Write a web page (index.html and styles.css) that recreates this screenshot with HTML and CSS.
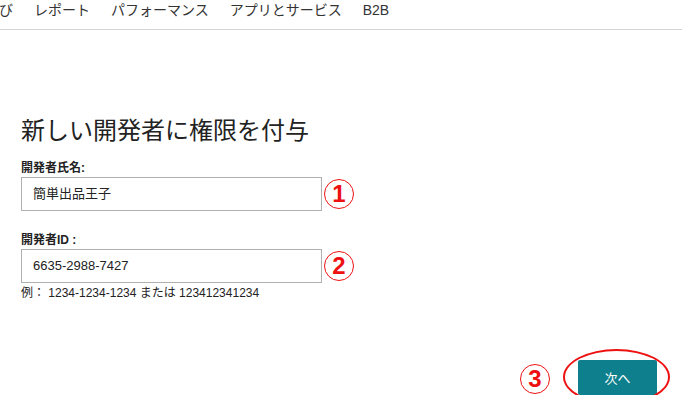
FILE: index.html
```html
<!DOCTYPE html>
<html lang="ja">
<head>
    <meta charset="UTF-8">
    <title>新しい開発者に権限を付与</title>
    <link rel="stylesheet" href="styles.css">
</head>
<body>
<nav class="topnav">
    <span class="nav-item first">び</span>
    <span class="nav-item">レポート</span>
    <span class="nav-item">パフォーマンス</span>
    <span class="nav-item">アプリとサービス</span>
    <span class="nav-item">B2B</span>
</nav>
<main>
    <h1>新しい開発者に権限を付与</h1>
    <label class="field-label">開発者氏名:</label>
    <div class="field-row">
        <div class="input-box">簡単出品王子</div>
        <span class="mark">1</span>
    </div>
    <label class="field-label second">開発者ID :</label>
    <div class="field-row">
        <div class="input-box">6635-2988-7427</div>
        <span class="mark">2</span>
    </div>
    <p class="hint">例： 1234-1234-1234 または 123412341234</p>
    <div class="actions">
        <span class="mark">3</span>
        <div class="btn-wrap">
            <button class="btn-next">次へ</button>
            <span class="ring"></span>
        </div>
    </div>
</main>
</body>
</html>
```

FILE: styles.css
```css
body {
    margin: 0;
    background: #fff;
    color: #222;
    font-family: "Liberation Sans", "Noto Sans CJK JP", sans-serif;
}
.topnav {
    display: flex;
    height: 29px;
    border-bottom: 1px solid #d4d4d4;
    font-size: 14px;
    color: #333;
    line-height: 20px;
}
.nav-item {
    margin-left: 21px;
}
.nav-item.first {
    margin-left: -1px;
}
main {
    padding: 86px 0 0 21px;
}
h1 {
    margin: 0;
    font-size: 24px;
    font-weight: normal;
    color: #222;
    line-height: 30px;
}
.field-label {
    display: block;
    margin-top: 14px;
    font-size: 12px;
    font-weight: bold;
    color: #222;
    line-height: 16px;
}
.field-label.second {
    margin-top: 21px;
}
.field-row {
    display: flex;
    align-items: center;
    margin-top: 1px;
}
.input-box {
    width: 288px;
    height: 32px;
    border: 1px solid #b0b0b0;
    padding-left: 11px;
    font-size: 13px;
    line-height: 32px;
    color: #222;
}
.mark {
    width: 28px;
    height: 28px;
    border: 1.6px solid #ee1111;
    border-radius: 50%;
    color: #ee1111;
    font-weight: bold;
    font-size: 24px;
    line-height: 28px;
    text-align: center;
    margin-left: 2px;
}
.hint {
    margin: 0;
    font-size: 12px;
    color: #222;
}
.actions {
    display: flex;
    align-items: center;
    justify-content: flex-end;
    padding-right: 25px;
    margin-top: 60px;
}
.actions .mark {
    margin-top: 2px;
}
.btn-wrap {
    position: relative;
    margin-left: 28px;
}
.btn-next {
    display: block;
    width: 79px;
    height: 35px;
    border: none;
    border-radius: 2px;
    background: #0e7f8c;
    color: #fff;
    font-family: "Liberation Sans", "Noto Sans CJK JP", sans-serif;
    font-size: 13px;
}
.ring {
    position: absolute;
    left: -15px;
    top: -11px;
    width: 103px;
    height: 52px;
    border: 2.5px solid #ee1111;
    border-radius: 50%;
}
```
